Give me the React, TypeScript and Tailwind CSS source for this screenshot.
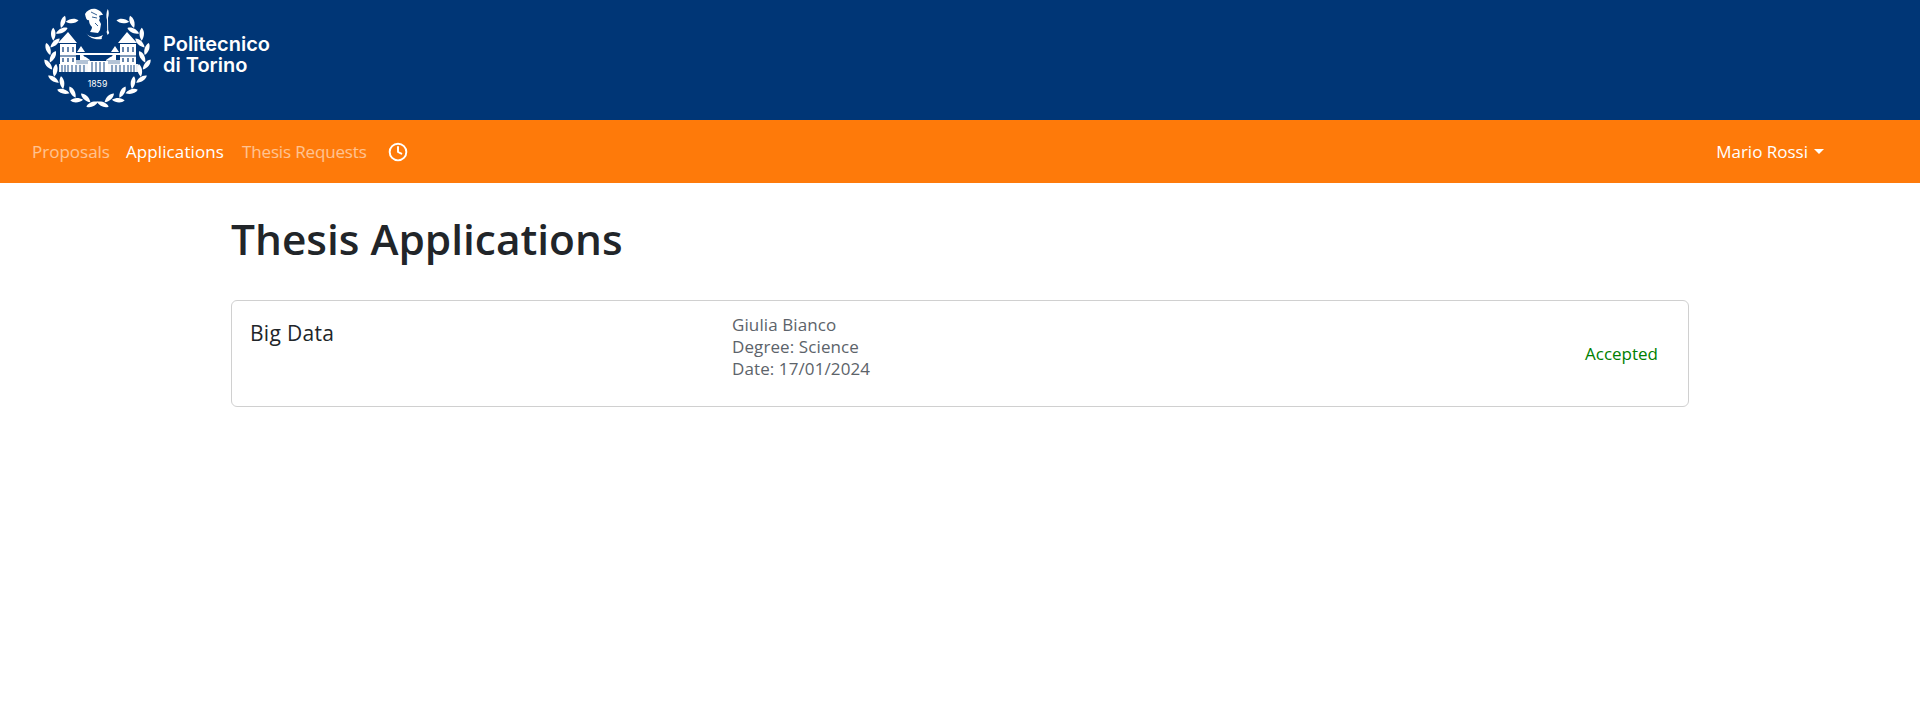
import { Clock } from 'lucide-react';

const leaves = Array.from({ length: 16 }, (_, i) => {
  const theta = 174 - i * 9.3;
  const a = (theta * Math.PI) / 180;
  const out = i % 2 === 0;
  const r = out ? 48 : 43;
  return {
    x: 97.5 + r * 1.04 * Math.sin(a),
    y: 56.5 - r * Math.cos(a),
    rot: theta - 90 + (out ? 28 : -28),
  };
});

function Wreath() {
  return (
    <>
      {leaves.map((l, i) => (
        <path
          key={i}
          d="M0-6.4C3-3.4 3 2.4 0 6.4-3 2.4-3-3.4 0-6.4Z"
          fill="#fff"
          transform={`translate(${l.x} ${l.y}) rotate(${l.rot})`}
        />
      ))}
    </>
  );
}

function Logo() {
  const navy = '#003676';
  return (
    <svg width="160" height="112" viewBox="0 0 160 112" className="shrink-0">
      <Wreath />
      <g transform="translate(195 0) scale(-1 1)">
        <Wreath />
      </g>
      {/* warrior */}
      <path d="M85 14c2-4 7-6 11-5 3 1 6 3 7 6-2 0-3 0-4 1 1 2 1 3 0 4l2 4-1 6-2 3-8-1c1-2 2-3 2-5-2-2-3-4-3-7-2 1-3-1-4-6z" fill="#fff" />
      <path d="M86 33c3 4 9 6 17 2-1 2-2 3-1 4-5 1-12 0-16-6z" fill="#fff" />
      <path d="M91 12l6 3M92 17l5 1M95 23l3 3" stroke={navy} strokeWidth="0.8" />
      <path d="M107.7 9c1.4 2 1.4 6 .3 9l.2 12 1 3-1.6 2-1-3 .6-2-.2-10c-1-3-.7-8 .7-11z" fill="#fff" />
      {/* castle */}
      <path d="M58 43l10-11 9 11zM118 43l9-11 10 11z" fill="#fff" />
      <path d="M60 44h16v28H60zM120 44h16v28h-16z" fill="#fff" />
      <path d="M77 52l4-6 4 6zM111 52l4-6 4 6z" fill="#fff" />
      <path d="M76 53h44v2H76zM80 53l10 7h16l10-7v7H80zM88 61h20v11H88z" fill="#fff" />
      <path d="M76 60h14v12H76zM106 60h14v12h-14z" fill="#fff" opacity="0.7" />
      <path d="M59 64h79v8H59z" fill="#fff" opacity="0.9" />
      <path d="M63 47v5M68 47v5M73 47v5M123 47v5M128 47v5M133 47v5M60 56h16M120 56h16M63 58v4M68 58v4M73 58v4M123 58v4M128 58v4M133 58v4" stroke={navy} strokeWidth="1.2" />
      <path d="M62 65v7M65 65v7M68 65v7M72 65v7M76 65v7M80 65v7M84 65v7M92 62v10M96 62v10M100 62v10M104 62v10M112 65v7M116 65v7M120 65v7M124 65v7M128 65v7M131 65v7M134 65v7M84 56h28" stroke={navy} strokeWidth="0.9" />
      <text x="97.5" y="87" textAnchor="middle" fontSize="8.7" fill="#fff" fontFamily="Inter, sans-serif">
        1859
      </text>
    </svg>
  );
}

export default function App() {
  return (
    <div className="min-h-screen bg-white font-['Open_Sans',sans-serif] text-[#212529]">
      <header className="h-[120px] bg-[#003676] flex items-start overflow-hidden">
        <Logo />
        <div className="ml-[3px] mt-[34px] font-['Inter',sans-serif] font-semibold text-[20px] leading-[21px] text-white">
          Politecnico
          <br />
          di Torino
        </div>
      </header>
      <nav className="h-[63px] bg-[#fe7a0a] flex items-center pl-[24px] pr-[96px] text-[17px]">
        <a className="px-2 text-white/55">Proposals</a>
        <a className="px-2 text-white tracking-[0.1px]">Applications</a>
        <a className="px-2 ml-[2px] text-white/55 tracking-[-0.15px]">Thesis Requests</a>
        <a className="px-2 ml-[5px] text-white">
          <Clock size={20} strokeWidth={2.3} />
        </a>
        <div className="ml-auto flex items-center text-white">
          Mario Rossi
          <span className="ml-[6px] border-t-[5px] border-x-[5px] border-x-transparent border-t-white" />
        </div>
      </nav>
      <main className="w-[1458px] mx-auto">
        <h1 className="mt-[31px] text-[42.4px] leading-[50px] font-semibold">Thesis Applications</h1>
        <div className="mt-[36px] h-[107px] border border-[#d0d0d0] rounded-[6px] flex pl-[18px] pr-[30px]">
          <div className="w-[482px] pt-[17px] text-[21px] leading-[30px] tracking-[0.3px]">Big Data</div>
          <div className="pt-[13px] text-[17px] leading-[22px] text-[#5c636a] tracking-[0.1px]">
            <div>Giulia Bianco</div>
            <div>Degree: Science</div>
            <div>Date: 17/01/2024</div>
          </div>
          <div className="ml-auto self-center text-[17px] text-[#008000]">Accepted</div>
        </div>
      </main>
    </div>
  );
}
